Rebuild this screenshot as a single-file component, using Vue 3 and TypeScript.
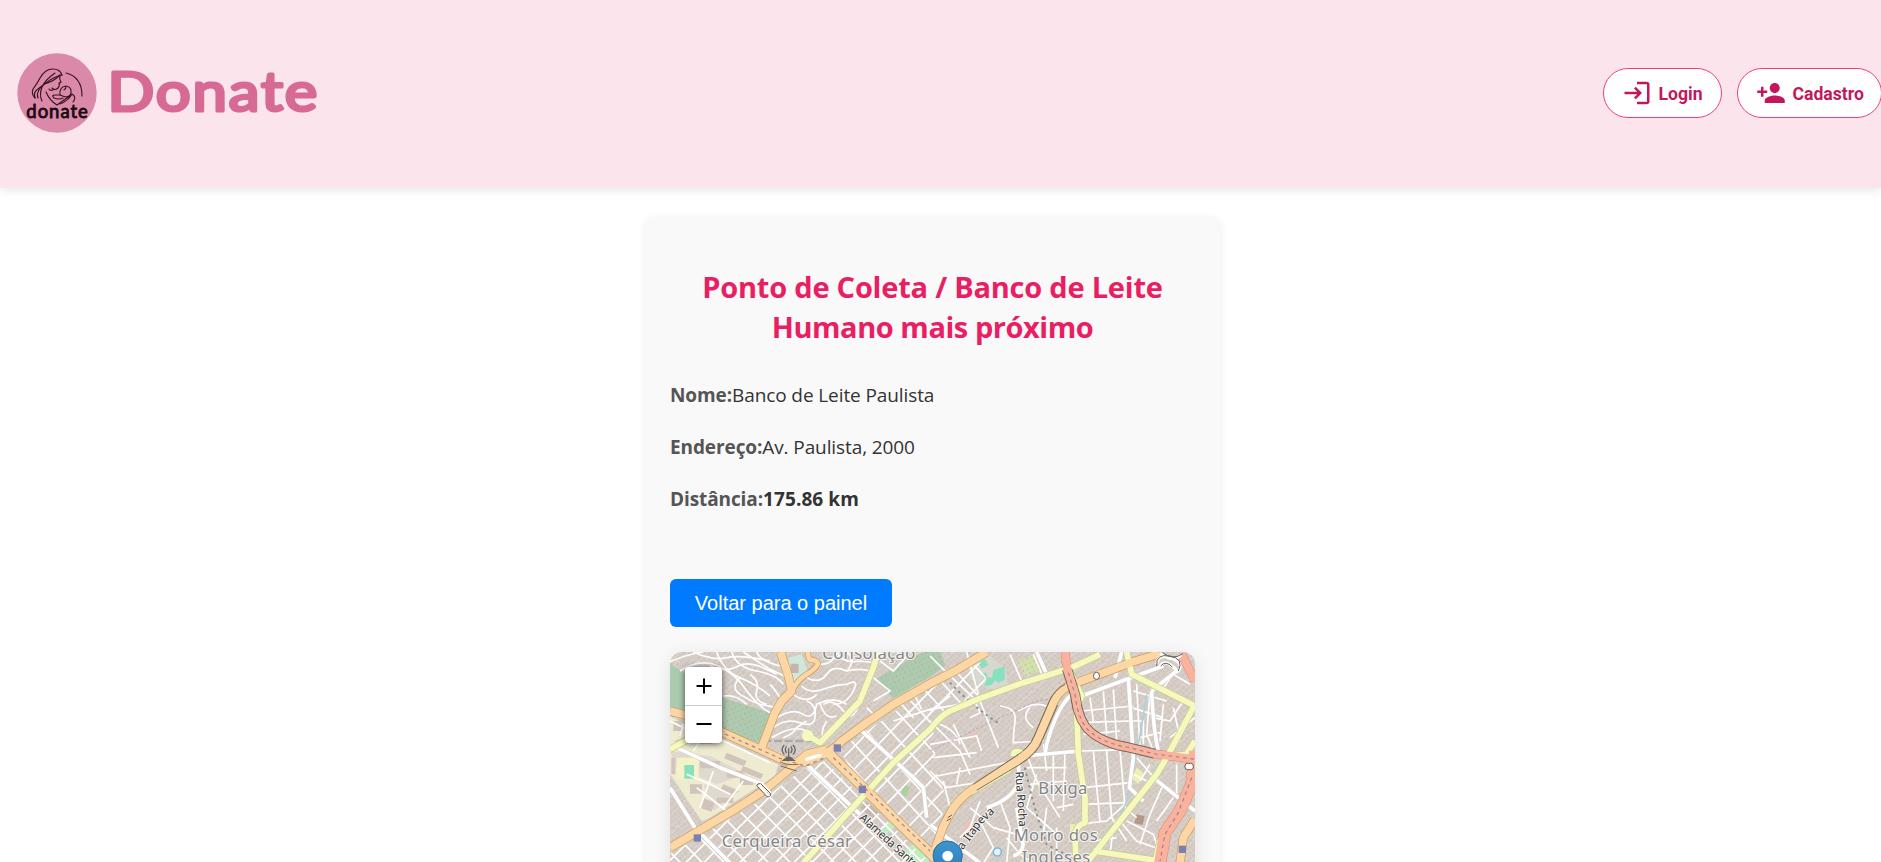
<script setup lang="ts">
interface Road {
  d: string
  kind: string
}

interface Field {
  label: string
  value: string
  strong?: boolean
}

const fields: Field[] = [
  { label: 'Nome:', value: 'Banco de Leite Paulista' },
  { label: 'Endereço:', value: 'Av. Paulista, 2000' },
  { label: 'Distância:', value: '175.86 km', strong: true },
]

// Parallel street lines, later clipped to a district
function parallels(x0: number, x1: number, step: number, lean: number): string {
  let d = ''
  for (let x = x0; x <= x1; x += step) d += `M${x} 0L${x + lean} 700`
  return d
}

const gridA = parallels(-660, 900, 66, 690)
const gridB = parallels(40, 1700, 54, -700)
const gridC = parallels(-60, 900, 72, 640)
const gridD = parallels(560, 1700, 66, -680)

const minor: string[] = [
  // Pacaembu, winding streets
  'M30 62Q80 40 130 33M60 90Q120 50 175 75T260 150Q300 200 330 215',
  'M100 33Q160 60 200 50T330 60M150 75Q200 95 235 75T350 100',
  'M170 33Q190 90 240 110T330 165M215 33Q230 80 290 90T370 130',
  'M250 33Q290 60 330 85L385 110M190 165Q230 160 260 190',
  'M290 33Q300 60 360 75M240 110Q210 140 240 160T300 190L350 200',
  'M270 100Q300 120 290 150T320 190M330 130Q350 150 365 180',
  'M440 110Q480 130 500 100T560 90Q590 60 560 33M480 70Q520 70 530 33',
  'M425 135Q450 160 490 145T560 130Q600 110 580 150T520 190',
  'M400 160Q440 190 470 160M350 230Q400 200 430 220T470 190Q520 165 560 190',
  'M340 260Q380 230 420 245T465 230Q470 190 440 180M335 290Q400 250 440 270',
  'M480 185Q495 240 530 225M490 190Q520 170 550 210T600 180',
  'M500 240Q480 270 490 295M370 290Q400 280 410 260L440 240',
  'M560 90Q600 80 630 90M530 33Q550 70 600 60L640 65',
  // campus west of the avenue
  'M30 240L110 280L170 290L330 365M60 285L70 250M120 300L100 330',
  'M80 400L150 430L210 460M160 390L120 500M250 420L190 500M110 440L200 510',
  // north grid
  'M640 180L690 150L640 110M620 200L650 230M660 60L700 90L740 45',
  'M760 155L785 205M700 240L810 205L900 190M720 185L760 230',
  // east side winding
  'M810 45L860 95L940 170L960 215L930 230M920 33L955 160M1050 40L1085 120M1120 40L1150 110',
  'M810 210L870 165M960 180L1015 320M1020 195Q1070 200 1065 240T1060 305L1150 300',
  'M1110 200Q1080 230 1120 260M1075 210Q1120 180 1160 195M810 240L900 330L930 400',
  'M840 250Q890 270 900 310M810 310L950 285L965 330M880 250L930 350M830 405L1040 365',
  'M810 390L860 440L980 420M820 350L950 335M850 420L870 500M890 430L900 380',
  'M960 480L930 560L900 590M930 500L1000 560L1070 580M1020 480L1050 560L1040 666',
  'M960 540L1000 620L970 666M1100 340L1130 420L1200 530M1100 380L1220 380M1150 310L1160 390',
  'M1180 340L1180 480M1215 330L1210 510M1110 430L1220 420M1130 400L1100 500L1190 580',
  'M1160 500L1150 580M1190 500L1240 490M1040 590L1080 640L1120 666M1190 560L1190 666',
  // Bixiga grid
  'M1265 210L1420 195M1260 245L1410 240M1270 280L1380 270M1260 330L1430 325',
  'M1300 330L1320 545M1340 330L1355 530L1400 600M1380 325L1395 500L1430 530',
  'M1270 440L1410 425M1270 490L1400 485M1250 550L1340 540L1400 485M1290 170L1300 240',
  'M1330 150L1340 280M1360 145L1370 300M1410 110L1415 330M1430 130L1440 330',
  'M1420 150L1520 180M1415 200L1510 230M1400 240L1450 240L1450 310M1470 155L1460 280L1480 330',
  'M1480 230L1530 240L1570 180M1440 290L1500 275M1510 190L1500 300M1430 350L1500 430',
  'M1420 400L1460 420M1470 370L1440 420M1510 430L1470 520L1440 610M1400 540L1480 580L1500 640',
  'M1380 540L1430 600L1500 625M1360 560L1350 640M1300 600L1370 590M1540 470L1490 540',
  'M1590 130L1540 100L1510 140M1540 200L1560 290M1530 290L1605 230M1550 370L1550 460',
]

const streets: string[] = [
  'M600 265L760 410L790 440L800 530',
  'M440 370L600 520',
  'M30 440L105 560L210 666',
  'M50 320L180 380L310 430',
  'M810 550L960 666',
  'M1090 345L1260 330M1235 160Q1190 200 1160 310L1155 340',
  'M1075 370L1078 410Q1070 470 980 500',
  'M1265 165L1400 115L1510 75',
  'M1405 110L1420 350L1408 440L1450 480',
  'M1475 150Q1480 280 1500 350M1475 150L1550 90',
  'M1480 410L1605 510',
  'M1070 500L1085 590Q1100 630 1060 645',
  'M1130 33L1160 100M1385 33L1365 110',
]

const roads: Road[] = [
  { kind: 'yellow', d: 'M655 33L640 80L600 180L480 305L440 282' },
  { kind: 'yellow', d: 'M430 666L560 520L700 365L810 265Q840 225 870 210L960 172L1090 125L1230 82L1320 40' },
  { kind: 'yellow', d: 'M30 325L80 298' },
  { kind: 'yellow', d: 'M1222 75L1265 165L1250 200L1255 340L1275 470L1275 545Q1245 555 1245 590L1248 666' },
  { kind: 'yellow', d: 'M1400 33L1415 100L1605 195' },
  { kind: 'yellow', d: 'M1605 190L1520 350L1490 400L1380 540L1280 666M1300 630L1500 660M1520 345L1580 340L1605 300M1530 560L1500 600L1485 666' },
  { kind: 'yellow', d: 'M930 455L1040 390L1098 342Q1060 320 1060 345' },
  { kind: 'orange', d: 'M30 210L75 222L190 275L300 325L370 358Q430 375 470 350Q520 330 545 300L620 245L700 190L810 128L890 87L980 33' },
  { kind: 'orange', d: 'M30 620L112 572L230 502L310 450L370 400L440 340L500 325' },
  { kind: 'orange', d: 'M303 325L345 215L365 180L395 150L385 105L362 33' },
  { kind: 'orange thin', d: 'M395 150Q415 115 440 100T472 72T448 55L442 33' },
  { kind: 'orange wide', d: 'M500 330L605 435L700 530L830 655' },
  { kind: 'orange', d: 'M820 640L850 555L880 500Q910 460 960 430L1070 360Q1120 330 1135 290L1180 185Q1200 140 1250 125L1340 92L1420 62L1500 38' },
  { kind: 'orange', d: 'M1605 535L1570 590L1560 666' },
  { kind: 'red', d: 'M1215 33L1222 90L1245 160Q1255 250 1300 280T1400 318L1480 338L1605 355' },
  { kind: 'red wide', d: 'M1605 330L1595 430L1560 510L1515 575L1500 666' },
  { kind: 'red', d: 'M1565 40L1605 120' },
]

const metro = [
  [532, 321],
  [607, 445],
  [112, 591],
  [1567, 625],
]
</script>

<template>
  <div class="page">
    <header class="top">
      <div class="brand">
        <svg class="logo" viewBox="0 0 80 80" aria-hidden="true">
          <circle cx="40" cy="40" r="39.7" fill="#db89a8" />
          <g fill="none" stroke="#35141f" stroke-width="1.15" stroke-linecap="round" stroke-linejoin="round">
            <path d="M18 45Q14 41 16 36Q20 31 23 25Q28 16 36 16Q43 16 45 22" />
            <path d="M18 45Q16 39 21 36Q25 33 29 30Q36 24 45 22" />
            <path d="M21 45Q19 40 24 34M25 48Q22 42 25 34Q28 27 38 20M27 31Q36 29 43 22" />
            <path d="M43 22Q42 26 44 29Q43 30 42 30Q43 33 41 35Q38 38 35 35M32 36Q33 38 36 37" />
            <path d="M29 39Q33 48 40 52L47 47" />
            <path d="M43 42Q42 34 49 33Q55 34 54 40Q53 44 49 44Q45 43 43 42ZM49 33Q49 36 47 37" />
            <path d="M43 42L38 42Q34 42 37 45Q42 47 46 45M47 47L54 42M43 51Q51 48 55 41Q60 44 56 49" />
            <path d="M49 20Q65 24 65 43" />
          </g>
          <text x="9.3" y="64.5" textLength="61.5">donate</text>
        </svg>
        <svg class="word" viewBox="0 0 230 80">
          <text transform="translate(5.5 58) scale(1.14 1)" textLength="184">Donate</text>
        </svg>
      </div>
      <nav class="actions">
        <a class="pill">
          <svg viewBox="0 0 24 24"><path d="M11 7 9.6 8.4l2.6 2.6H2v2h10.2l-2.6 2.6L11 17l5-5-5-5zm9 12h-8v2h8c1.1 0 2-.9 2-2V5c0-1.1-.9-2-2-2h-8v2h8v14z" /></svg>
          <span>Login</span>
        </a>
        <a class="pill wide">
          <svg viewBox="0 0 24 24"><path d="M15 12c2.21 0 4-1.79 4-4s-1.79-4-4-4-4 1.79-4 4 1.79 4 4 4zm-9-2V7H4v3H1v2h3v3h2v-3h3v-2H6zm9 4c-2.67 0-8 1.34-8 4v2h16v-2c0-2.66-5.33-4-8-4z" /></svg>
          <span>Cadastro</span>
        </a>
      </nav>
    </header>

    <main class="card">
      <h2>Ponto de Coleta / Banco de Leite<br /><span class="second">Humano mais próximo</span></h2>
      <p v-for="f in fields" :key="f.label" class="field">
        <strong class="label">{{ f.label }}</strong><span :class="{ strong: f.strong }">{{ f.value }}</span>
      </p>
      <button class="back">Voltar para o painel</button>

      <div class="map">
        <svg class="tiles" viewBox="30 33 1575 633" preserveAspectRatio="xMinYMin slice">
          <defs>
            <pattern id="blocks" width="47" height="41" patternUnits="userSpaceOnUse" patternTransform="rotate(-42)">
              <rect width="47" height="41" fill="#dcd5cf" />
              <path d="M1 2h9v8h-9zM12 1h7v12h-7zM21 3h10v7h-10zM33 1h12v9h-12zM2 13h8v11h-8zM12 16h10v8h-10zM24 12h7v13h-7zM33 13h5v9h-5zM40 12h6v13h-6zM1 27h11v12h-11zM14 27h7v8h-7zM23 28h12v11h-12zM37 28h8v7h-8z" fill="#d0c6be" />
            </pattern>
            <pattern id="graves" width="21" height="19" patternUnits="userSpaceOnUse" patternTransform="rotate(18)">
              <path d="M3 4h3v3h-3zM13 12h3v4h-3z" fill="#dc8e80" />
            </pattern>
            <clipPath id="south"><path d="M30 640L300 480L430 385L495 360L810 666H30Z" /></clipPath>
            <clipPath id="north"><path d="M540 325L810 140L970 60L985 165L850 225L810 265L600 440Z" /></clipPath>
            <clipPath id="center"><path d="M620 450L820 270L830 400L860 470L820 620Z" /></clipPath>
            <linearGradient id="pin" x1="0" y1="0" x2="0" y2="1">
              <stop offset="0" stop-color="#3b95d2" />
              <stop offset="1" stop-color="#2873ae" />
            </linearGradient>
          </defs>

          <rect x="30" y="33" width="1575" height="633" fill="url(#blocks)" />

          <path d="M30 225L90 260L90 300L190 300L355 370L345 405L150 530L125 540L30 400Z" fill="#eeebd0" />
          <path d="M30 330L150 345L260 400L170 430L50 380ZM130 430L240 450L160 510Z" fill="#e0d9d0" />
          <path d="M120 360h60v22h-60zM200 390h50v20h-50zM90 430h36v28h-36zM170 470h50v16h-50zM240 410h40v22h-40zM40 240h24v30h-24zM115 295h40v14h-40zM250 375l60 25-8 14-60-24zM200 335l60 25-8 16-60-24zM130 470l34 16-10 26-30-10zM190 430l40 16-10 14-38-14zM45 300l30-12 6 16-30 12zM34 350h12v50h-12z" fill="#d0c4bb" />
          <path d="M50 350h66v66h-66z" fill="#f5f1c8" />
          <rect x="73" y="372" width="29" height="41" fill="#88e0be" />

          <path d="M30 68L190 170L335 217L302 308L190 268L30 200Z" fill="#aacbaf" />
          <path d="M190 170L335 217L302 308L190 268Z" fill="url(#graves)" />
          <path d="M650 112L790 33H842L855 75L810 107L700 172Z" fill="#aacbaf" />
          <path d="M650 112L790 33H842L855 75L810 107L700 172Z" fill="url(#graves)" />
          <path d="M925 75L985 40L1035 80L1045 135L990 145L930 115Z" fill="#d7d8d0" />
          <path d="M1000 88l34-12v40l-18 10-10-8-12 14-22 4 10-28 14 2zM955 65l20-12 10 18-20 12zM965 100l12-6 6 12-14 4z" fill="#88e0be" />
          <path d="M1070 62L1125 40L1142 90L1095 105Z" fill="#cfe2ae" />
          <path d="M1070 62L1125 40L1142 90L1095 105Z" fill="url(#graves)" />
          <path d="M385 50l40-10 20 60-35 30-22-20z" fill="#cfe8da" />
          <path d="M392 68h24v28h-24z" fill="#c3b5ab" />
          <path d="M665 570l25-30 15 15-25 27zM740 620l30-15 40 50-10 11h-65zM690 500l22 15-12 12-22-12z" fill="#bfedbd" />
          <path d="M735 430l15 10-12 27-15-10z" fill="#a9d2a0" />
          <path d="M1430 380l20 15-15 35-20-18zM1230 550h30v20h-30z" fill="#eff0ae" />
          <path d="M940 275l22 8-12 15-20-10zM925 535l30 25-25 35-25-20z" fill="#eec1b9" />
          <path d="M1430 520l24 6-6 26-25-5z" fill="#b4998a" />
          <path d="M620 480l40 35-20 18-40-32z" fill="#c6b8b0" />

          <g class="minor">
            <g clip-path="url(#south)"><path :d="gridA" /><path :d="gridB" /></g>
            <g clip-path="url(#north)"><path :d="gridC" /><path :d="gridD" /></g>
            <g clip-path="url(#center)"><path :d="gridC" /><path :d="gridD" /></g>
            <path v-for="(d, i) in minor" :key="i" :d="d" />
          </g>
          <path d="M870 125Q930 190 1020 250M1095 380Q1120 500 1160 610L1250 660" class="rail" />
          <path d="M1460 160Q1440 300 1400 480Q1370 560 1330 590" class="water" />
          <path d="M810 330L1000 240L1130 180L1210 170" class="boundary" />
          <path d="M310 300h150" stroke="#aaa" stroke-width="7" stroke-dasharray="24 8" />

          <g class="street-case"><path v-for="(d, i) in streets" :key="i" :d="d" /></g>
          <g class="street"><path v-for="(d, i) in streets" :key="i" :d="d" /></g>
          <path v-for="(r, i) in roads" :key="'c' + i" :d="r.d" class="case" :class="r.kind" />
          <path v-for="(r, i) in roads" :key="'f' + i" :d="r.d" class="fill" :class="r.kind" />

          <g fill="none" stroke="#5e574e" stroke-width="2.5">
            <path d="M1208 88L1231 162Q1242 257 1296 292T1400 332L1480 351M1235 82L1259 158Q1268 240 1304 267T1404 305L1488 325" />
            <path d="M940 430L1062 349Q1110 320 1122 286L1168 180Q1185 145 1215 130M950 448L1078 371Q1134 339 1148 295L1193 192" />
            <path d="M360 362q20 12 55 8M362 375l48 15" />
          </g>
          <g class="arrows">
            <path d="M195 279L360 352L435 375L490 352M520 350L810 630" />
            <path d="M1225 95L1245 160Q1255 250 1300 280T1400 318L1480 338L1605 355M1595 410L1555 515L1515 580L1500 660" />
          </g>

          <circle cx="443" cy="284" r="17" fill="#f6f9be" />
          <path d="M440 355Q460 348 480 343" stroke="#fff" stroke-width="10" fill="none" stroke-linecap="round" />
          <g fill="none" stroke="#665e58" stroke-width="3">
            <path d="M296 432l30 34M306 428l26 29" stroke="#fff" stroke-width="8" />
            <path d="M290 434l31 33q10 2 12-8l-31-31q-10-2-12 6z" />
            <rect x="1301" y="94" width="17" height="21" rx="8" fill="#fff" />
            <rect x="1575" y="367" width="25" height="19" rx="8" fill="#fff" />
            <path d="M863 530l13-8M860 540l13-8" />
            <path d="M1490 70q5-35 45-18t18 40M1500 75q12-20 36 0t12 18M1500 37q40 30 63 5" stroke="#fff" stroke-width="9" />
            <path d="M1490 75q-3-38 40-30t25 45M1502 75q15-18 35 3M1508 35q30 25 60 3" />
          </g>

          <g fill="none" stroke="#666" stroke-width="4">
            <path d="M386 322v28M380 316q-8 9 0 20M392 316q8 9 0 20M373 312q-13 14 0 29M399 312q13 14 0 29" />
            <path d="M370 358l11-9h10l11 9z" fill="#666" />
          </g>
          <rect v-for="(m, i) in metro" :key="'m' + i" :x="m[0] - 11" :y="m[1] - 11" width="22" height="22" fill="#7b80b3" />
          <circle cx="1012" cy="633" r="12" fill="#e8f1f4" stroke="#82b9df" stroke-width="5" />

          <g class="area">
            <text x="487" y="54" textLength="279">Consolação</text>
            <text x="185" y="618" textLength="391">Cerqueira César</text>
            <text x="1135" y="459" textLength="147">Bixiga</text>
            <text x="1061" y="599" textLength="252">Morro dos</text>
            <text x="1085" y="666" textLength="206">Ingleses</text>
          </g>
          <g class="road-name">
            <text transform="translate(1066 392) rotate(86)" textLength="166">Rua Rocha</text>
            <text transform="translate(596 533) rotate(42)" textLength="240">Alameda Santos</text>
            <text transform="translate(880 672) rotate(-57)" textLength="72">Rua</text>
            <text transform="translate(927 602) rotate(-54)" textLength="62">Itap</text>
            <text transform="translate(963 551) rotate(-42)" textLength="56">eva</text>
          </g>
          <path d="M863 600a44 44 0 0 1 44 44q0 18-15 40l-29 50-29-50q-15-22-15-40a44 44 0 0 1 44-44z" fill="url(#pin)" stroke="#2d6c9d" stroke-width="3" />
          <circle cx="863" cy="645" r="16" fill="#fff" />
        </svg>
        <div class="zoom">
          <span class="zoom-btn"><svg viewBox="0 0 16 16"><path d="M8 0.5V15.5M0.5 8H15.5" /></svg></span>
          <span class="zoom-btn"><svg viewBox="0 0 16 16"><path d="M0.5 8H15.5" /></svg></span>
        </div>
      </div>
    </main>
  </div>
</template>

<style>
body {
  background: #fff;
}
</style>

<style scoped>
.page {
  height: 862px;
  overflow: hidden;
  font-family: "Open Sans", "Noto Sans", sans-serif;
}
.top {
  box-sizing: border-box;
  height: 188px;
  padding: 0 0 2px 17px;
  display: flex;
  align-items: center;
  justify-content: space-between;
  background: #fbe4eb;
  box-shadow: 0 2px 10px rgba(0, 0, 0, 0.1);
}
.brand {
  display: flex;
  align-items: center;
}
.logo {
  width: 80px;
  height: 80px;
}
.logo text {
  font: 400 18.5px Lato, sans-serif;
  fill: #180a10;
  stroke: #180a10;
  stroke-width: 0.8;
  stroke-linejoin: round;
}
.word {
  width: 230px;
  height: 80px;
  margin-left: 5px;
}
.word text {
  font: 400 54px Lato, sans-serif;
  fill: #d76a94;
  stroke: #d76a94;
  stroke-width: 3.2;
  stroke-linejoin: round;
}
.actions {
  display: flex;
  flex: none;
  gap: 15px;
  margin-right: -1px;
}
.pill {
  box-sizing: border-box;
  width: 119px;
  height: 50px;
  padding-left: 17.5px;
  display: flex;
  align-items: center;
  gap: 7px;
  border: 1px solid #ec407a;
  border-radius: 25px;
  background: #fff;
  color: #c2185b;
  font: 700 17.6px/24px Roboto, sans-serif;
}
.pill.wide {
  width: 145px;
}
.pill svg {
  flex: none;
  width: 30px;
  height: 30px;
  fill: currentColor;
}
.pill span {
  padding-top: 2px;
}
.card {
  box-sizing: border-box;
  width: 576px;
  height: 900px;
  margin: 28px 0 0 644.5px;
  padding: 51px 25.5px;
  border-radius: 12px;
  background: #f9f9f9;
  box-shadow: 0 2px 8px rgba(0, 0, 0, 0.07);
}
h2 {
  margin: 0 0 35px;
  font-size: 29px;
  line-height: 40px;
  font-weight: 700;
  letter-spacing: -0.22px;
  text-align: center;
  color: #e91e63;
}
.second {
  letter-spacing: -0.45px;
}
.field {
  margin: 0 0 26px;
  font-size: 19px;
  line-height: 26px;
  letter-spacing: -0.1px;
  color: #333;
}
.label {
  color: #555;
}
.strong {
  font-weight: 700;
  letter-spacing: 0.1px;
}
.back {
  display: block;
  width: 222px;
  height: 48px;
  margin: 67px 0 25px;
  padding: 0;
  border: 0;
  border-radius: 6px;
  background: #007bff;
  color: #fff;
  font: 20px "Liberation Sans", Arial, sans-serif;
}
.map {
  position: relative;
  height: 400px;
  border-radius: 12px;
  overflow: hidden;
  box-shadow: 0 4px 18px rgba(0, 0, 0, 0.1);
}
.tiles {
  display: block;
  width: 525px;
  height: 211px;
}
.zoom {
  position: absolute;
  left: 15px;
  top: 15px;
  width: 37px;
  border-radius: 4px;
  background: #fff;
  box-shadow: 0 1px 6px rgba(0, 0, 0, 0.65);
}
.zoom-btn {
  height: 37.5px;
  display: flex;
  align-items: center;
  justify-content: center;
}
.zoom-btn + .zoom-btn {
  border-top: 1px solid #ccc;
}
.zoom-btn svg {
  width: 16px;
  height: 16px;
  margin-left: 1px;
  stroke: #000;
  stroke-width: 2;
}
.minor {
  fill: none;
  stroke: #fff;
  stroke-width: 5;
}
.street-case,
.street {
  fill: none;
  stroke: #cfcac6;
  stroke-width: 14;
  stroke-linejoin: round;
}
.street {
  stroke: #fff;
  stroke-width: 11;
}
.case,
.fill {
  fill: none;
  stroke-linejoin: round;
}
.case.yellow {
  stroke: #c9cc86;
  stroke-width: 21;
}
.fill.yellow {
  stroke: #f6f9be;
  stroke-width: 17;
}
.case.orange {
  stroke: #c99b57;
  stroke-width: 27;
}
.fill.orange {
  stroke: #fcd6a4;
  stroke-width: 23;
}
.case.orange.thin {
  stroke-width: 18;
}
.fill.orange.thin {
  stroke-width: 14;
}
.case.orange.wide {
  stroke-width: 32;
}
.fill.orange.wide {
  stroke-width: 28;
}
.case.red {
  stroke: #dc8878;
  stroke-width: 27;
}
.fill.red {
  stroke: #f9b29c;
  stroke-width: 24;
}
.case.red.wide {
  stroke-width: 38;
}
.fill.red.wide {
  stroke-width: 35;
}
.arrows {
  fill: none;
  stroke: #9b8295;
  stroke-width: 3.5;
  stroke-dasharray: 11 11;
}
.rail {
  fill: none;
  stroke: #8d8d8d;
  stroke-width: 6;
  stroke-dasharray: 7 11;
}
.water {
  fill: none;
  stroke: #abd3df;
  stroke-width: 5;
}
.boundary {
  fill: none;
  stroke: #bda5bd;
  stroke-width: 3;
  stroke-dasharray: 9 5;
}
.area text {
  font: 50px "Noto Sans", sans-serif;
  fill: #858585;
  stroke: rgba(255, 255, 255, 0.75);
  stroke-width: 7;
  stroke-linejoin: round;
  paint-order: stroke;
}
.road-name text {
  font: 34px "Noto Sans", sans-serif;
  fill: #333;
  stroke: rgba(255, 255, 255, 0.75);
  stroke-width: 6;
  stroke-linejoin: round;
  paint-order: stroke;
}
</style>
